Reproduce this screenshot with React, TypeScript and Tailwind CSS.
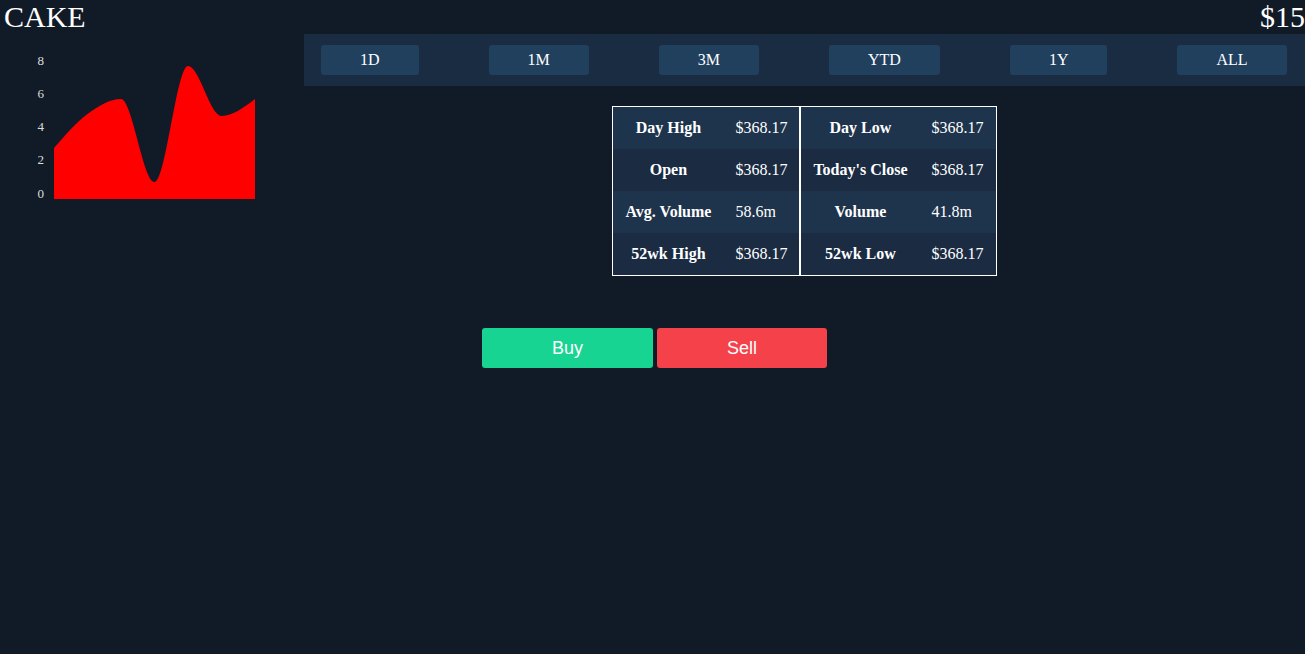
import React from "react";

const serif = { fontFamily: '"Liberation Serif", "Times New Roman", serif' };

function Chart() {
  const labels = [
    { v: "8", y: 60 },
    { v: "6", y: 93 },
    { v: "4", y: 126 },
    { v: "2", y: 159 },
    { v: "0", y: 193 },
  ];
  return (
    <svg width="304" height="210" viewBox="0 34 304 210" className="block">
      {labels.map((l) => (
        <text
          key={l.v}
          x="44"
          y={l.y + 4.5}
          textAnchor="end"
          fontSize="13"
          fill="#dddddd"
          fontFamily='"Liberation Serif", serif'
        >
          {l.v}
        </text>
      ))}
      <path
        d="M54 148 C65.17 135.08 76.33 122.15 87.5 114 C98.67 105.85 109.83 99 121 99 C132.17 99 143.33 182 154.5 182 C165.67 182 176.83 66 188 66 C199.17 66 210.33 116 221.5 116 C232.67 116 243.83 107.49 255 99 L255 199 L54 199 Z"
        fill="#ff0000"
      />
    </svg>
  );
}

const ranges = ["1D", "1M", "3M", "YTD", "1Y", "ALL"];

function StatTable({ rows }: { rows: [string, string][] }) {
  return (
    <table className="border border-white border-collapse">
      <tbody>
        {rows.map(([k, v], i) => (
          <tr key={k} className={i % 2 === 0 ? "bg-[#1e334c]" : "bg-[#1a2b42]"}>
            <th className="p-3 text-center font-bold text-white text-base leading-[18px] whitespace-nowrap">{k}</th>
            <td className="p-3 text-left text-white text-base leading-[18px] whitespace-nowrap">{v}</td>
          </tr>
        ))}
      </tbody>
    </table>
  );
}

export default function App() {
  return (
    <div className="w-[1305px] h-[654px] bg-[#111b27] text-white overflow-hidden" style={serif}>
      <div className="flex justify-between items-start h-[34px]">
        <div className="text-[30px] leading-[34px] pl-1">CAKE</div>
        <div className="text-[30px] leading-[34px]">$15</div>
      </div>
      <div className="flex">
        <div className="w-[304px] shrink-0">
          <Chart />
        </div>
        <div className="flex-1 flex flex-col items-center">
          <div className="w-full h-[52px] bg-[#1a2c42] flex items-center pl-[17px] gap-[70px]">
            {ranges.map((r) => (
              <button
                key={r}
                className="h-[30px] px-[39px] rounded-[3px] bg-[#21405e] text-white text-base"
                style={serif}
              >
                {r}
              </button>
            ))}
          </div>
          <div className="flex mt-5">
            <StatTable
              rows={[
                ["Day High", "$368.17"],
                ["Open", "$368.17"],
                ["Avg. Volume", "58.6m"],
                ["52wk High", "$368.17"],
              ]}
            />
            <StatTable
              rows={[
                ["Day Low", "$368.17"],
                ["Today's Close", "$368.17"],
                ["Volume", "41.8m"],
                ["52wk Low", "$368.17"],
              ]}
            />
          </div>
        </div>
      </div>
      <div className="flex justify-center gap-1 mt-[52px] pl-1" style={{ fontFamily: '"Liberation Sans", Arial, sans-serif' }}>
        <button className="w-[171px] h-10 rounded-[3px] bg-[#18d492] text-white text-lg">Buy</button>
        <button className="w-[170px] h-10 rounded-[3px] bg-[#f4414a] text-white text-lg">Sell</button>
      </div>
    </div>
  );
}
